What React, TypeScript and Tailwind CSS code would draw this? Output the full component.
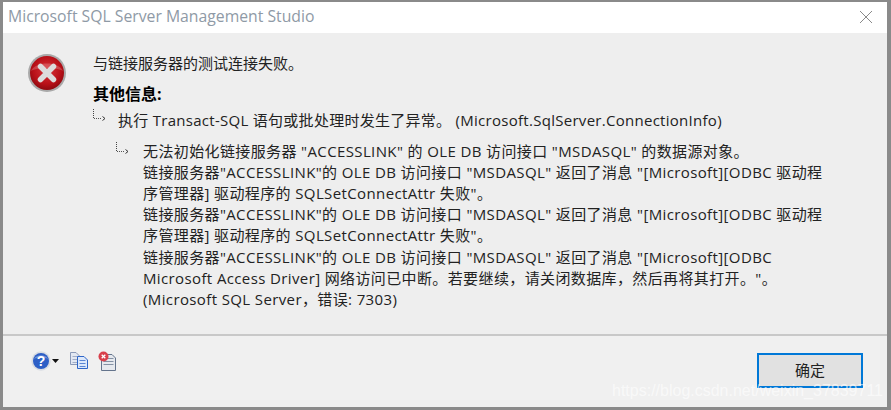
import React from "react";

const font = { fontFamily: '"Open Sans", "Noto Sans CJK SC", sans-serif' };

function Arrow() {
  return (
    <svg width="17" height="17" viewBox="0 0 17 17" className="shrink-0" fill="none">
      <path d="M0.5 1V10" stroke="#444" strokeDasharray="1 1" />
      <path d="M1 10.5H9" stroke="#555" strokeDasharray="1 1" />
      <path d="M9.5 8.5L12 10.5L9.5 12.5" stroke="#333" />
    </svg>
  );
}

function ErrorIcon() {
  return (
    <svg width="40" height="40" viewBox="0 0 40 40">
      <defs>
        <radialGradient id="eg" cx="50%" cy="42%" r="58%">
          <stop offset="0%" stopColor="#d8343a" />
          <stop offset="70%" stopColor="#b81018" />
          <stop offset="100%" stopColor="#8e0a10" />
        </radialGradient>
      </defs>
      <circle cx="20" cy="20" r="19" fill="#a9a9a9" />
      <circle cx="20" cy="20" r="17" fill="url(#eg)" />
      <path d="M4 18C8 8 32 8 36 18C30 14 10 14 4 18Z" fill="#fff" opacity="0.2" />
      <path d="M13.5 13.5L26.5 26.5M26.5 13.5L13.5 26.5" stroke="#dcdcdc" strokeWidth="5.5" strokeLinecap="round" />
    </svg>
  );
}

function HelpIcon() {
  return (
    <svg width="20" height="20" viewBox="0 0 20 20">
      <circle cx="10" cy="10" r="9.7" fill="#d8dce2" />
      <circle cx="10" cy="10" r="8" fill="#2d5fc6" />
      <path d="M3 8C5 3 15 3 17 8C13 6 7 6 3 8Z" fill="#fff" opacity="0.3" />
      <text x="10" y="15" textAnchor="middle" fontSize="14" fontWeight="700" fill="#fff" fontFamily="Liberation Sans">?</text>
    </svg>
  );
}

function Doc({ x, y, w, h, fill, stroke }: { x: number; y: number; w: number; h: number; fill: string; stroke: string }) {
  return (
    <g>
      <path d={`M${x + 0.5} ${y + 0.5}H${x + w - 4}L${x + w - 0.5} ${y + 4}V${y + h - 0.5}H${x + 0.5}Z`} fill={fill} stroke={stroke} />
      {[4, 7, 10].map((d) => (
        <path key={d} d={`M${x + 2.5} ${y + d + 0.5}H${x + w - 2.5}`} stroke={stroke} opacity="0.75" />
      ))}
    </g>
  );
}

function CopyIcon() {
  return (
    <svg width="20" height="19" viewBox="0 0 20 19">
      <Doc x={1} y={1} w={10} h={13} fill="#e3e8f2" stroke="#8b9ab8" />
      <Doc x={8} y={5} w={11} h={13} fill="#dce8fb" stroke="#2f66c8" />
    </svg>
  );
}

function DetailsIcon() {
  return (
    <svg width="19" height="21" viewBox="0 0 19 21">
      <Doc x={3} y={3} w={15} h={17} fill="#e6e9ee" stroke="#64748c" />
      <circle cx="5.5" cy="5.5" r="5" fill="#d8404c" />
      <path d="M3.7 3.7L7.3 7.3M7.3 3.7L3.7 7.3" stroke="#fff" strokeWidth="1.3" />
    </svg>
  );
}

const lines = [
  '无法初始化链接服务器 "ACCESSLINK" 的 OLE DB 访问接口 "MSDASQL" 的数据源对象。',
  '链接服务器"ACCESSLINK"的 OLE DB 访问接口 "MSDASQL" 返回了消息 "[Microsoft][ODBC 驱动程',
  "序管理器] 驱动程序的 SQLSetConnectAttr 失败\"。",
  '链接服务器"ACCESSLINK"的 OLE DB 访问接口 "MSDASQL" 返回了消息 "[Microsoft][ODBC 驱动程',
  "序管理器] 驱动程序的 SQLSetConnectAttr 失败\"。",
  '链接服务器"ACCESSLINK"的 OLE DB 访问接口 "MSDASQL" 返回了消息 "[Microsoft][ODBC',
  'Microsoft Access Driver] 网络访问已中断。若要继续，请关闭数据库，然后再将其打开。"。',
  "(Microsoft SQL Server，错误: 7303)",
];

export default function App() {
  return (
    <div className="relative flex h-[410px] w-[891px] overflow-hidden bg-[#8a8a8a] pb-[3px] pl-[3px] pr-[4px] pt-[2px]" style={font}>
      <div className="flex min-w-0 flex-1 flex-col bg-[#f0f0f0]">
        <div className="flex h-[31px] shrink-0 items-center justify-between bg-white pb-[2px] pl-[5px] pr-[14px]">
          <span className="text-[15.75px] text-[#8f9aa6]">Microsoft SQL Server Management Studio</span>
          <svg width="14" height="14" viewBox="0 0 14 14">
            <path d="M1 1L13 13M13 1L1 13" stroke="#8a8a8a" strokeWidth="1" />
          </svg>
        </div>
        <div className="flex h-[301px] shrink-0 bg-[#eeeeee] pl-[24px] pt-[20px]">
          <div className="w-[40px] shrink-0">
            <ErrorIcon />
          </div>
          <div className="flex flex-col pl-[26px] text-[15px] leading-[21.2px] tracking-[0.38px] text-[#222222]">
            <div className="tracking-normal">与链接服务器的测试连接失败。</div>
            <div className="mt-[10px] text-[16px] font-bold tracking-normal text-black">其他信息:</div>
            <div className="mt-[3px] flex items-start tracking-[0.28px]">
              <Arrow />
              <span className="mt-[2px] pl-[8px]">执行 Transact-SQL 语句或批处理时发生了异常。 (Microsoft.SqlServer.ConnectionInfo)</span>
            </div>
            <div className="ml-[23px] mt-[9px] flex items-start">
              <Arrow />
              <div className="whitespace-nowrap pl-[10px]">
                {lines.map((l, i) => (
                  <div key={i}>{l}</div>
                ))}
              </div>
            </div>
          </div>
        </div>
        <div className="h-[2px] shrink-0 bg-[#c8c8c8]" />
        <div className="flex flex-1 items-start justify-between pl-[28px] pr-[24px] pt-[15px]">
          <div className="flex items-start">
            <HelpIcon />
            <svg width="7" height="4" viewBox="0 0 7 4" className="ml-[1px] mr-[10px] mt-[8px]">
              <path d="M0 0H7L3.5 4Z" fill="#111" />
            </svg>
            <CopyIcon />
            <div className="ml-[9px]">
              <DetailsIcon />
            </div>
          </div>
          <button className="mt-[2px] h-[35px] w-[106px] border-[2px] border-[#0078d7] bg-[#e1e1e1] text-[15px] text-[#222222]">确定</button>
        </div>
      </div>
      <div className="absolute left-[612px] top-[379px] text-[16px] text-white/60" style={{ fontFamily: '"Liberation Sans", sans-serif' }}>
        https://blog.csdn.net/weixin_37839711
      </div>
    </div>
  );
}
